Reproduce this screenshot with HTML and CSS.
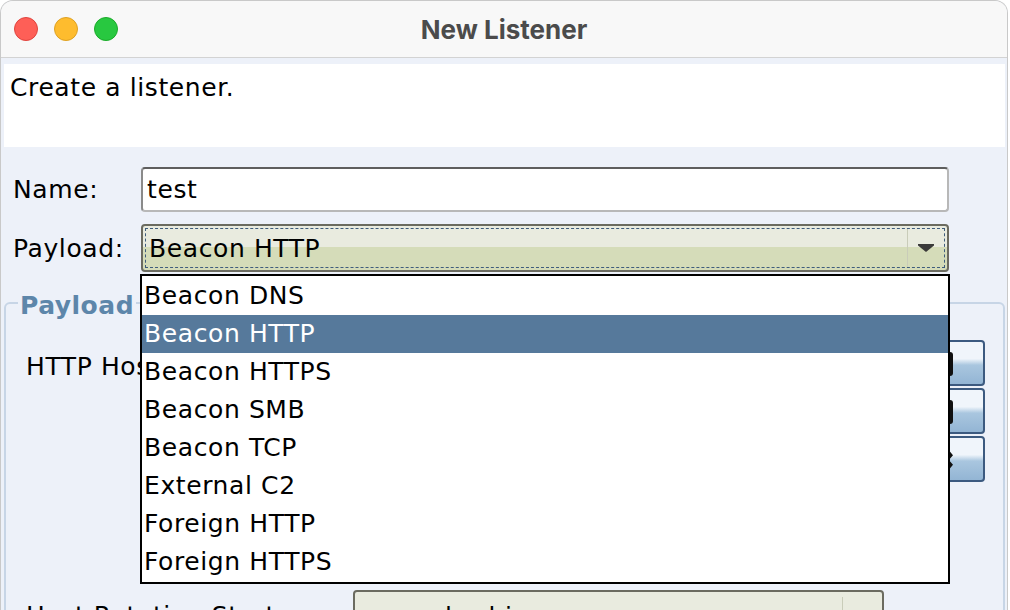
FILE: index.html
```html
<!DOCTYPE html>
<html>
<head>
<meta charset="utf-8">
<link rel="stylesheet" href="styles.css">
</head>
<body>
<div class="window">
  <div class="titlebar">
    <div class="lights">
      <span class="light red"></span>
      <span class="light yellow"></span>
      <span class="light green"></span>
    </div>
    <div class="title">New Listener</div>
  </div>
  <div class="content">
    <div class="header">Create a listener.</div>
    <div class="row name-row">
      <label class="lbl">Name:</label>
      <div class="textfield">test</div>
    </div>
    <div class="row payload-row">
      <label class="lbl">Payload:</label>
      <div class="combo">
        <div class="combo-focus">
          <span class="combo-text">Beacon HTTP</span>
          <span class="combo-btn"><svg width="16" height="8" viewBox="0 0 16 8"><path d="M0 0 H16 V1.5 L8 8 L0 1.5 Z" fill="#3a3a3a"/></svg></span>
        </div>
      </div>
    </div>
    <fieldset class="group">
      <legend class="legend">Payload</legend>
      <div class="hosts-row">
        <div class="hosts-label">HTTP Hosts:</div>
        <div class="hosts-table"></div>
        <div class="hosts-btns">
          <div class="hbtn"><span class="ico ico-a"></span></div>
          <div class="hbtn"><span class="ico ico-b"></span></div>
          <div class="hbtn"><span class="ico ico-c"></span></div>
        </div>
      </div>
      <div class="rot-row">
        <div class="rot-label">Host Rotation Strategy:</div>
        <div class="rot-combo"><span class="rot-text">round-robin</span><span class="rot-btn"></span></div>
      </div>
    </fieldset>
  </div>
  <ul class="dropdown">
    <li>Beacon DNS</li>
    <li class="sel">Beacon HTTP</li>
    <li>Beacon HTTPS</li>
    <li>Beacon SMB</li>
    <li>Beacon TCP</li>
    <li>External C2</li>
    <li>Foreign HTTP</li>
    <li>Foreign HTTPS</li>
  </ul>
</div>
</body>
</html>
```
FILE: styles.css
```css
* { box-sizing: border-box; }
html, body {
  margin: 0;
  padding: 0;
  width: 1010px;
  height: 610px;
  overflow: hidden;
  background: #ffffff;
}
.window {
  position: relative;
  width: 1008px;
  height: 612px;
  background: #edf1f9;
  border: 1px solid #c9c9c9;
  border-bottom: none;
  border-radius: 13px 13px 0 0;
  overflow: hidden;
  font-family: "DejaVu Sans", "Liberation Sans", sans-serif;
  font-size: 25px;
  letter-spacing: 0.6px;
  color: #000;
}
.titlebar {
  height: 57px;
  background: #f8f8f8;
  border-bottom: 1px solid #d3d3d3;
  display: flex;
  align-items: center;
  position: relative;
}
.lights {
  display: flex;
  gap: 16px;
  padding-left: 13px;
}
.light {
  width: 24px;
  height: 24px;
  border-radius: 50%;
  display: block;
}
.red { background: #fe5f57; border: 1px solid #e0443e; }
.yellow { background: #febc2e; border: 1px solid #dea123; }
.green { background: #28c840; border: 1px solid #1aab29; }
.title {
  position: absolute;
  left: 0;
  right: 0;
  text-align: center;
  font-family: "Inter", "Liberation Sans", sans-serif;
  font-weight: 700;
  font-size: 26px;
  letter-spacing: 0;
  color: #4b4b4b;
}
.content {
  padding: 6px 2px 0 3px;
}
.header {
  background: #ffffff;
  height: 83px;
  padding: 6px 6px 0 6px;
  line-height: 36px;
}
.row {
  display: flex;
  align-items: center;
  padding-left: 9px;
}
.lbl {
  width: 128px;
  flex: none;
}
.name-row { margin-top: 20px; height: 45px; }
.textfield {
  width: 808px;
  height: 45px;
  background: #fff;
  border: 2px solid #b8b8b8;
  border-top-color: #5e5e5e;
  border-left-color: #8a8a8a;
  border-radius: 4px;
  padding-left: 4px;
  line-height: 41px;
}
.payload-row { margin-top: 12px; height: 48px; }
.combo {
  width: 808px;
  height: 48px;
  border: 2px solid #6b6b60;
  border-radius: 4px;
  background: linear-gradient(#e9ebdf 0 48%, #d5dcb9 48% 100%);
  padding: 2px;
}
.combo-focus {
  height: 100%;
  border: 1px dashed #3f5d7c;
  display: flex;
  align-items: center;
  justify-content: space-between;
}
.combo-text { padding-left: 3px; }
.combo-btn {
  width: 37px;
  height: 100%;
  border-left: 1px solid #c9ccb9;
  display: flex;
  align-items: center;
  justify-content: center;
  background: linear-gradient(#e9ebdf 0 48%, #d5dcb9 48% 100%);
}
.group {
  margin: 15px 0 0 0;
  border: 2px solid #c7d5e6;
  border-radius: 6px;
  padding: 0 18px 0 20px;
  height: 340px;
  min-width: 0;
}
.legend {
  font-weight: 700;
  color: #5d86aa;
  padding: 6px 2px 0 2px;
  margin-left: -8px;
  letter-spacing: 0.5px;
  line-height: 26px;
}
.hosts-row {
  display: flex;
  margin-top: 21px;
}
.hosts-label {
  width: 320px;
  padding-top: 12px;
}
.hosts-table { flex: 1; }
.hosts-btns {
  display: flex;
  flex-direction: column;
  gap: 2px;
  margin-top: 0;
}
.hbtn {
  width: 40px;
  height: 46px;
  border: 2px solid #3c5a80;
  border-radius: 4px;
  background: linear-gradient(#f0f5fb 0 40%, #a9c6df 55%, #93b5d4 100%);
  position: relative;
}
.ico {
  position: absolute;
  left: 0;
  top: 10px;
  width: 6px;
  height: 24px;
  background: #111;
  border-radius: 0 3px 3px 0;
}
.ico-c {
  clip-path: polygon(0 0, 100% 30%, 30% 50%, 100% 70%, 0 100%);
}
.rot-row {
  display: flex;
  align-items: flex-start;
  margin-top: 108px;
}
.rot-label {
  width: 327px;
  padding-top: 11px;
}
.rot-combo {
  width: 531px;
  height: 48px;
  border: 2px solid #6b6b60;
  border-radius: 4px;
  background: linear-gradient(#e9ebdf 0 48%, #d5dcb9 48% 100%);
  display: flex;
  justify-content: space-between;
  padding: 5px 3px 0 22px;
}
.rot-text { line-height: 40px; }
.rot-btn {
  width: 37px;
  border-left: 1px solid #c9ccb9;
  height: 40px;
}
.dropdown {
  position: absolute;
  left: 139px;
  top: 273px;
  width: 810px;
  height: 310px;
  margin: 0;
  padding: 1px 0 0 0;
  list-style: none;
  background: #fff;
  border: 2px solid #000;
}
.dropdown li {
  height: 38px;
  line-height: 38px;
  padding-left: 2px;
}
.dropdown li.sel {
  background: #56799b;
  color: #fff;
}
```
